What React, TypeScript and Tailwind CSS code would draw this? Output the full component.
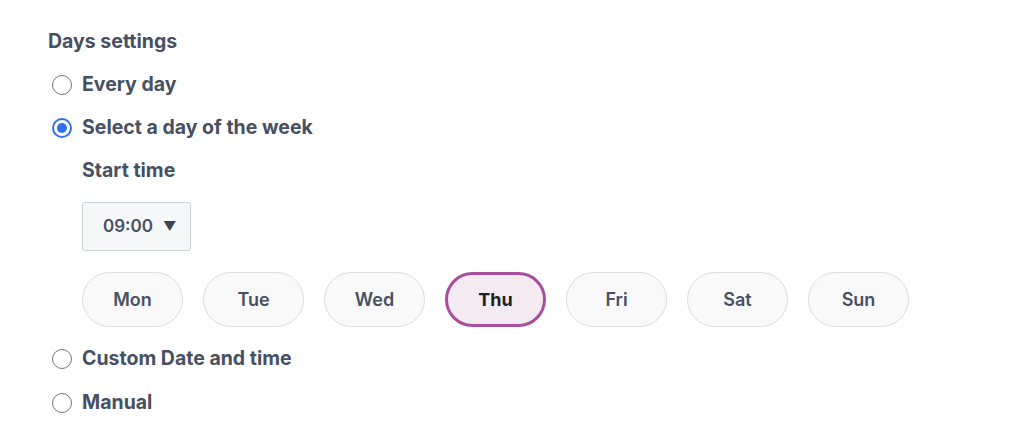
import { useState } from "react";

const days = ["Mon", "Tue", "Wed", "Thu", "Fri", "Sat", "Sun"];

type Mode = "every" | "week" | "custom" | "manual";

const Radio = ({ checked, label, onClick }: { checked: boolean; label: string; onClick: () => void }) => (
  <button onClick={onClick} className="flex items-center h-[43px] pl-[52px] gap-[10px] text-left">
    <span
      className={`w-5 h-5 rounded-full flex items-center justify-center flex-shrink-0 ${
        checked ? "border-2 border-[#2f6ff0]" : "border-[1.5px] border-[#767676]"
      }`}
    >
      {checked && <span className="w-[10px] h-[10px] rounded-full bg-[#2f6ff0]" />}
    </span>
    <span className="text-[19.5px] font-bold text-[#475063]">{label}</span>
  </button>
);

export default function App() {
  const [mode, setMode] = useState<Mode>("week");
  const [day, setDay] = useState("Thu");

  return (
    <div className="bg-white w-[1024px] h-[445px] pt-5 font-['Inter',sans-serif]">
      <div className="flex items-center h-[43px] pl-12 text-[19.5px] font-bold text-[#475063]">Days settings</div>
      <Radio checked={mode === "every"} label="Every day" onClick={() => setMode("every")} />
      <Radio checked={mode === "week"} label="Select a day of the week" onClick={() => setMode("week")} />

      {/* Week options */}
      <div className="pl-[82px]">
        <div className="flex items-center h-[43px] text-[19.5px] font-bold text-[#475063]">Start time</div>
        <button className="mt-[10px] flex items-center gap-[10px] w-[109px] h-[49px] pl-5 bg-[#f6f7f9] border border-[#cfd1d4] rounded-[3px] text-[17px] font-semibold text-[#475063]">
          09:00
          <span className="text-[13px] text-[#3b4252]">▼</span>
        </button>
        <div className="flex gap-5 mt-[21px]">
          {days.map((d) =>
            d === day ? (
              <button
                key={d}
                onClick={() => setDay(d)}
                className="w-[101px] h-[55px] rounded-full border-[3px] border-[#a74f9c] bg-[#f3ebf1] text-[18px] font-bold text-[#1e1f24]"
              >
                {d}
              </button>
            ) : (
              <button
                key={d}
                onClick={() => setDay(d)}
                className="w-[101px] h-[55px] rounded-full border border-[#dcdcdc] bg-[#f9f9f9] text-[18px] font-semibold text-[#475063]"
              >
                {d}
              </button>
            )
          )}
        </div>
      </div>

      <div className="mt-[10px] flex flex-col">
        <Radio checked={mode === "custom"} label="Custom Date and time" onClick={() => setMode("custom")} />
        <div className="h-px" />
        <Radio checked={mode === "manual"} label="Manual" onClick={() => setMode("manual")} />
      </div>
    </div>
  );
}
